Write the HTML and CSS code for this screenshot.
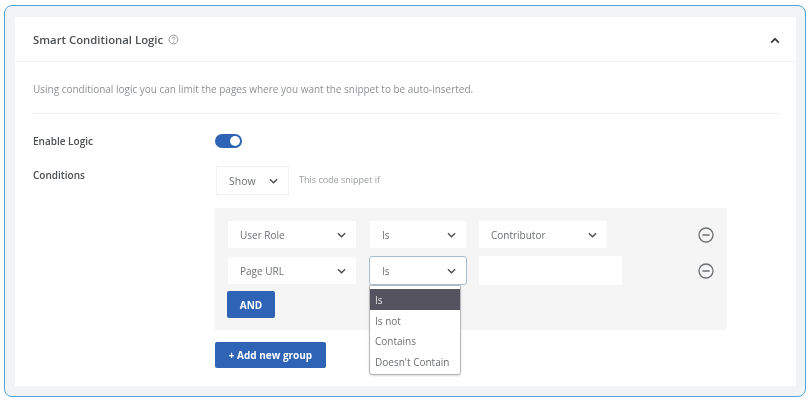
FILE: index.html
```html
<!DOCTYPE html>
<html lang="en">
<head>
  <meta charset="UTF-8">
  <title>Smart Conditional Logic</title>
  <link rel="stylesheet" href="styles.css">
</head>
<body>
  <div class="frame">
    <div class="card">
      <div class="card-head">
        <div class="title">Smart Conditional Logic
          <svg class="help" viewBox="0 0 12 12" width="11" height="11"><circle cx="6" cy="6" r="4.8" fill="none" stroke="#8a8d91" stroke-width="1"/><path d="M4.6 4.8c0-1.7 2.8-1.7 2.8 0 0 1-1.4 1-1.4 2.1" fill="none" stroke="#8a8d91" stroke-width=".9"/><circle cx="6" cy="8.6" r=".55" fill="#8a8d91"/></svg>
        </div>
        <svg class="collapse" viewBox="0 0 10 7" width="10" height="7"><path d="M1.2 5.6 5 1.8l3.8 3.8" fill="none" stroke="#3c4043" stroke-width="1.8"/></svg>
      </div>
      <div class="card-body">
        <p class="desc">Using conditional logic you can limit the pages where you want the snippet to be auto-inserted.</p>
        <div class="field field-logic">
          <div class="label">Enable Logic</div>
          <div class="toggle"><span class="knob"></span></div>
        </div>
        <div class="field">
          <div class="label label-cond">Conditions</div>
          <div class="cond">
            <div class="show-row">
              <div class="select show">Show <svg class="chev" viewBox="0 0 10 6" width="9" height="6"><path d="M1 1l4 4 4-4" fill="none" stroke="#4a4d50" stroke-width="1.5"/></svg></div>
              <span class="hint">This code snippet if</span>
            </div>
            <div class="group">
              <div class="rule rule-1">
                <div class="select w-attr">User Role <svg class="chev" viewBox="0 0 10 6" width="9" height="6"><path d="M1 1l4 4 4-4" fill="none" stroke="#4a4d50" stroke-width="1.5"/></svg></div>
                <div class="select w-op">Is <svg class="chev" viewBox="0 0 10 6" width="9" height="6"><path d="M1 1l4 4 4-4" fill="none" stroke="#4a4d50" stroke-width="1.5"/></svg></div>
                <div class="select w-attr">Contributor <svg class="chev" viewBox="0 0 10 6" width="9" height="6"><path d="M1 1l4 4 4-4" fill="none" stroke="#4a4d50" stroke-width="1.5"/></svg></div>
                <svg class="minus" viewBox="0 0 16 16" width="16" height="16"><circle cx="8" cy="8" r="7" fill="none" stroke="#6b6e70" stroke-width="1.3"/><path d="M4.4 8h7.2" stroke="#6b6e70" stroke-width="1.5"/></svg>
              </div>
              <div class="rule rule-2">
                <div class="select w-attr">Page URL <svg class="chev" viewBox="0 0 10 6" width="9" height="6"><path d="M1 1l4 4 4-4" fill="none" stroke="#4a4d50" stroke-width="1.5"/></svg></div>
                <div class="select w-op focused">Is <svg class="chev" viewBox="0 0 10 6" width="9" height="6"><path d="M1 1l4 4 4-4" fill="none" stroke="#4a4d50" stroke-width="1.5"/></svg>
                  <ul class="menu">
                    <li class="active">Is</li>
                    <li>Is not</li>
                    <li>Contains</li>
                    <li>Doesn't Contain</li>
                  </ul>
                </div>
                <div class="text-input"></div>
                <svg class="minus" viewBox="0 0 16 16" width="16" height="16"><circle cx="8" cy="8" r="7" fill="none" stroke="#6b6e70" stroke-width="1.3"/><path d="M4.4 8h7.2" stroke="#6b6e70" stroke-width="1.5"/></svg>
              </div>
              <button class="btn btn-and">AND</button>
            </div>
            <button class="btn btn-add">+ Add new group</button>
          </div>
        </div>
      </div>
    </div>
  </div>
</body>
</html>
```

FILE: styles.css
```css
html, body {
  margin: 0;
  background: #fff;
  font-family: "Open Sans", "Noto Sans", sans-serif;
}
.frame {
  width: 802px;
  height: 392px;
  margin: 5px 0 0 4px;
  box-sizing: border-box;
  border: 1px solid #4fa6dd;
  border-radius: 8px;
  background: #f1f3f5;
  padding: 11px 9px 10px 10px;
  filter: blur(0.45px);
}
.card {
  height: 100%;
  background: #fff;
}
.card-head {
  height: 45px;
  box-sizing: border-box;
  border-bottom: 1px solid #f0f1f2;
  padding: 0 16px 0 18px;
  display: flex;
  align-items: center;
  justify-content: space-between;
}
.title {
  font-size: 11.35px;
  font-weight: 600;
  color: #4b4e52;
  display: flex;
  align-items: center;
  gap: 5px;
}
.collapse {
  margin-top: 3px;
}
.card-body {
  padding: 0 16px 0 18px;
}
.desc {
  margin: 0;
  height: 52px;
  box-sizing: border-box;
  padding-top: 20px;
  border-bottom: 1px solid #f0f1f2;
  font-size: 9.97px;
  line-height: 15px;
  color: #8d9094;
}
.field {
  display: flex;
}
.field-logic {
  margin-top: 20px;
  height: 32px;
}
.label {
  width: 182px;
  font-size: 10px;
  font-weight: 600;
  line-height: 15px;
  color: #4b4e52;
}
.label-cond {
  padding-top: 2px;
}
.toggle {
  width: 27px;
  height: 14px;
  border-radius: 7px;
  background: #2f63b5;
  position: relative;
}
.knob {
  position: absolute;
  right: 2px;
  top: 2px;
  width: 10px;
  height: 10px;
  border-radius: 50%;
  background: #fff;
}
.cond {
  width: 512px;
}
.show-row {
  display: flex;
  align-items: center;
  gap: 10px;
  margin-left: 1px;
}
.hint {
  font-size: 9px;
  color: #9a9da0;
  margin-top: -2px;
}
.select {
  height: 27px;
  box-sizing: border-box;
  background: #fff;
  padding: 0 10px 0 12px;
  display: flex;
  align-items: center;
  justify-content: space-between;
  font-size: 10px;
  color: #6c6f73;
  position: relative;
}
.show {
  width: 73px;
  height: 29px;
  border: 1px solid #f0f1f2;
  font-size: 10.5px;
}
.w-attr {
  width: 128px;
}
.w-op {
  width: 96px;
}
.group {
  margin-top: 13px;
  height: 122px;
  box-sizing: border-box;
  background: #f5f5f6;
  padding: 13px 0 0 12px;
}
.rule {
  display: flex;
  align-items: center;
  position: relative;
}
.rule-1 {
  margin: 0 0 8px 1px;
  gap: 13px;
}
.rule-1 .select:first-child {
  margin-right: 1px;
}
.rule-2 {
  margin: 0 0 6px 1px;
  gap: 14px;
}
.minus {
  position: absolute;
  left: 470px;
}
.focused {
  width: 98px;
  height: 29px;
  margin-left: -1px;
  margin-right: -2px;
  padding-left: 12px;
  border: 1px solid #a9bdd0;
  border-radius: 3px;
}
.text-input {
  width: 143px;
  height: 29px;
  background: #fff;
}
.menu {
  position: absolute;
  left: -1px;
  top: 28px;
  width: 92px;
  height: 90px;
  box-sizing: border-box;
  margin: 0;
  padding: 3px 0 0;
  list-style: none;
  background: #fff;
  border: 1px solid #b5b7ba;
  border-radius: 0 0 3px 3px;
  box-shadow: 0 1px 2px rgba(0, 0, 0, 0.15);
  z-index: 2;
}
.menu li {
  height: 20.5px;
  line-height: 22px;
  padding-left: 5px;
  font-size: 10px;
  color: #6c6f73;
}
.menu li.active {
  background: #55535f;
  color: #e4e4e8;
}
.btn {
  display: block;
  border: 0;
  border-radius: 2px;
  background: #2f63b5;
  color: #fff;
  font-family: inherit;
  font-size: 10px;
  font-weight: 700;
  padding: 0;
}
.btn-and {
  width: 48px;
  height: 27px;
  margin-left: 0;
}
.btn-add {
  width: 111px;
  height: 26px;
  margin-top: 12px;
}
```
